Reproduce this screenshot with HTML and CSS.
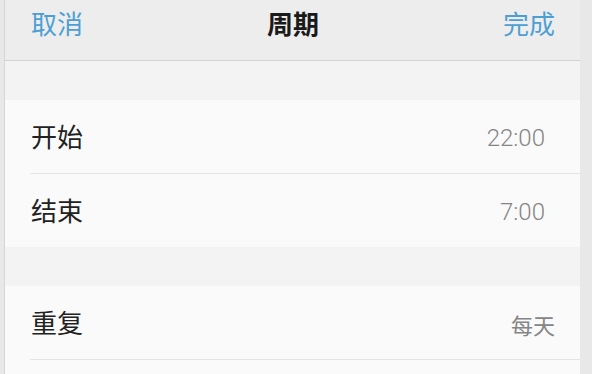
FILE: index.html
```html
<!DOCTYPE html>
<html lang="zh-CN">
<head>
    <meta charset="UTF-8">
    <meta name="viewport" content="width=device-width, initial-scale=1.0">
    <title>周期</title>
    <link rel="stylesheet" href="styles.css">
</head>
<body>
    <div class="panel">
        <div class="nav-bar">
            <span class="nav-btn">取消</span>
            <span class="nav-title">周期</span>
            <span class="nav-btn">完成</span>
        </div>

        <div class="gap"></div>

        <div class="group">
            <div class="row">
                <span class="label">开始</span>
                <span class="value">22:00</span>
            </div>
            <div class="row">
                <span class="label">结束</span>
                <span class="value">7:00</span>
            </div>
        </div>

        <div class="gap"></div>

        <div class="group">
            <div class="row">
                <span class="label">重复</span>
                <span class="value value-text">每天</span>
            </div>
            <div class="row">
                <span class="label"></span>
            </div>
        </div>
    </div>
</body>
</html>
```

FILE: styles.css
```css
/* Global Styling */
body {
    margin: 0;
    padding: 0;
    font-family: "Noto Sans CJK SC", "Noto Sans", sans-serif;
    background-color: #e8e8e8;
    overflow: hidden;
}

.panel {
    margin-left: 4px;
    width: 575px;
    height: 374px;
    border-left: 1px solid #d6d6d6;
    background-color: #f3f3f3;
    overflow: hidden;
}

/* Top bar */
.nav-bar {
    display: flex;
    align-items: center;
    justify-content: space-between;
    height: 60px;
    padding: 0 25px 0 26px;
    background-color: #ededed;
    border-bottom: 1px solid #d2d2d2;
}

.nav-btn {
    font-size: 26px;
    color: #4d9fd3;
    margin-top: -16px;
}

.nav-title {
    font-size: 26px;
    font-weight: bold;
    color: #1a1a1a;
    margin-top: -16px;
}

.gap {
    height: 39px;
}

/* List rows */
.group {
    background-color: #fafafa;
}

.row {
    display: flex;
    align-items: center;
    justify-content: space-between;
    height: 73px;
    margin-left: 25px;
    padding-right: 35px;
    border-bottom: 1px solid #e4e4e4;
}

.group .row:last-child {
    border-bottom: none;
}

.label {
    font-size: 26px;
    color: #222;
    margin-left: 1px;
    margin-top: -2px;
}

.value {
    font-family: Roboto, sans-serif;
    font-weight: 300;
    font-size: 24px;
    color: #858585;
    margin-top: 2px;
}

.value-text {
    font-family: "Noto Sans CJK SC", sans-serif;
    font-weight: 400;
    font-size: 22px;
    margin-right: -10px;
}
```
